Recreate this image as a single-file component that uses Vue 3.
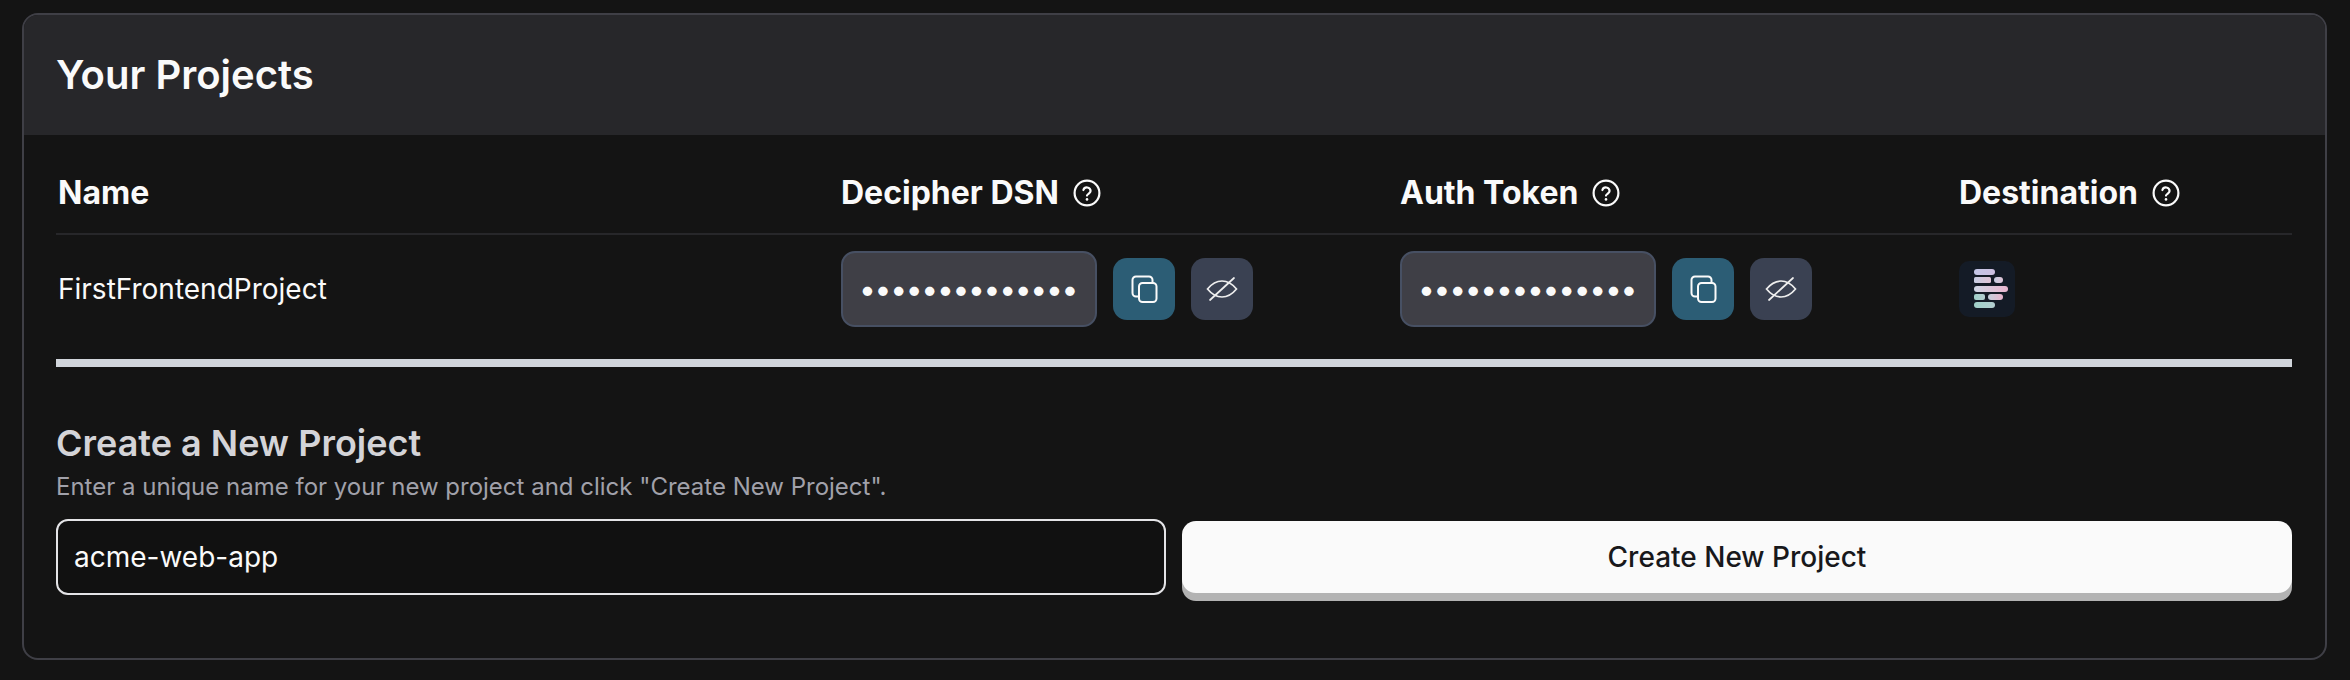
<script setup>
const columns = ['Decipher DSN', 'Auth Token', 'Destination']
const secrets = ['dsn-key-000000', 'tok-key-000000']
</script>

<template>
  <main class="card">
    <header class="card-head">
      <h1>Your Projects</h1>
    </header>
    <section class="card-body">
      <div class="table-row head-row">
        <div class="name-cell head-label">Name</div>
        <div v-for="col in columns" :key="col" class="head-cell">
          <span class="head-label">{{ col }}</span>
          <svg class="help" viewBox="0 0 28 28" fill="none" stroke="currentColor" stroke-width="2.2" stroke-linecap="round" aria-hidden="true">
            <circle cx="14" cy="14" r="12.4" />
            <path d="M10.4 11a3.7 3.7 0 0 1 7.2 1c0 2.4-3.6 3-3.6 4.6" />
            <path d="M14 20.4v.1" stroke-width="2.6" />
          </svg>
        </div>
      </div>
      <div class="table-row data-row">
        <div class="name-cell project-name">FirstFrontendProject</div>
        <div v-for="secret in secrets" :key="secret" class="secret-cell">
          <input class="secret" type="password" :value="secret" readonly />
          <button class="icon-btn copy" type="button" aria-label="Copy">
            <svg viewBox="0 0 32 32" fill="none" stroke="currentColor" stroke-width="2" aria-hidden="true">
              <path d="M24.5 10V7a3.5 3.5 0 0 0-3.5-3.5H8A3.5 3.5 0 0 0 4.5 7v13A3.5 3.5 0 0 0 8 23.5h3" />
              <rect x="11" y="10" width="17.5" height="19" rx="3.5" />
            </svg>
          </button>
          <button class="icon-btn eye" type="button" aria-label="Show">
            <svg viewBox="0 0 32 32" fill="none" stroke="currentColor" stroke-width="1.7" stroke-linecap="round" aria-hidden="true">
              <path d="M1.5 16C6 10.5 11 8 16 8s10 2.5 14.5 8C26 21.5 21 24 16 24S6 21.5 1.5 16Z" />
              <path d="M4 27 28 5" />
            </svg>
          </button>
        </div>
        <div class="dest-cell">
          <svg class="logo" viewBox="0 0 56 56" aria-hidden="true">
            <defs>
              <linearGradient id="g1" x1="0" x2="1" y1="0" y2="0"><stop offset="0" stop-color="#c3c6e6" /><stop offset="1" stop-color="#cdbfe0" /></linearGradient>
              <linearGradient id="g2" x1="0" x2="1" y1="0" y2="0"><stop offset="0" stop-color="#c5cbe0" /><stop offset="1" stop-color="#e0c4d6" /></linearGradient>
              <linearGradient id="g3" x1="0" x2="1" y1="0" y2="0"><stop offset="0" stop-color="#cfd6e4" /><stop offset="1" stop-color="#eab6cf" /></linearGradient>
              <linearGradient id="g4" x1="0" x2="1" y1="0" y2="0"><stop offset="0" stop-color="#9fd0c8" /><stop offset="1" stop-color="#b4ced0" /></linearGradient>
              <linearGradient id="g5" x1="0" x2="1" y1="0" y2="0"><stop offset="0" stop-color="#c4d0dc" /><stop offset="1" stop-color="#e9b4cc" /></linearGradient>
            </defs>
            <rect width="56" height="56" rx="10" fill="#141b26" />
            <rect x="15" y="8" width="21" height="6" rx="3" fill="url(#g1)" />
            <rect x="15" y="16" width="17" height="6" rx="1.5" fill="url(#g2)" />
            <rect x="35" y="16" width="9" height="6" rx="3" fill="url(#g2)" />
            <rect x="15" y="25" width="34" height="6" rx="3" fill="url(#g3)" />
            <rect x="15" y="33" width="11" height="6" rx="2" fill="url(#g4)" />
            <rect x="29" y="33" width="15" height="6" rx="3" fill="url(#g5)" />
            <rect x="15" y="41" width="21" height="6" rx="3" fill="url(#g4)" />
          </svg>
        </div>
      </div>
      <hr class="rule" />
      <h2>Create a New Project</h2>
      <p>Enter a unique name for your new project and click "Create New Project".</p>
      <div class="create-row">
        <input class="name-input" type="text" value="acme-web-app" />
        <button class="create-btn" type="button">Create New Project</button>
      </div>
    </section>
  </main>
</template>

<style>
html, body { background: #141414; }
</style>

<style scoped>
.card {
  margin: 13px 23px 20px 22px;
  height: 647px;
  box-sizing: border-box;
  border: 2px solid #3f3f46;
  border-radius: 16px;
  overflow: hidden;
  background: #141414;
  font-family: Inter, "Liberation Sans", sans-serif;
  color: #fafafa;
}
.card-head {
  height: 120px;
  background: #27272a;
  display: flex;
  align-items: center;
  padding: 0 32px;
}
h1 { margin: 0 0 1px; font-size: 40px; font-weight: 600; line-height: 44px; color: #fafafa; }
.card-body { padding: 17px 33px 0 32px; }
.table-row {
  display: grid;
  grid-template-columns: 785px 559px 559px 1fr;
  align-items: center;
}
.head-row { height: 81px; border-bottom: 2px solid #27272a; }
.data-row { height: 107px; }
.name-cell { padding-left: 2px; }
.head-cell { display: flex; align-items: center; gap: 14px; }
.head-label { font-size: 32px; font-weight: 700; line-height: 36px; }
.help { width: 28px; height: 28px; color: #fafafa; }
.project-name { font-size: 28px; line-height: 36px; }
.secret-cell { display: flex; align-items: center; gap: 16px; }
.secret {
  width: 256px;
  height: 76px;
  box-sizing: border-box;
  padding: 0 6px 0 16px;
  background: #3f3f46;
  border: 2px solid #475063;
  border-radius: 14px;
  color: #fafafa;
  font-family: inherit;
  font-size: 30px;
  letter-spacing: -1.3px;
  outline: none;
}
.icon-btn {
  width: 62px;
  height: 62px;
  padding: 0;
  border: 0;
  border-radius: 14px;
  display: flex;
  align-items: center;
  justify-content: center;
  color: #fafafa;
}
.icon-btn svg { width: 32px; height: 32px; }
.copy { background: #2c5d75; }
.eye { background: #3a4152; color: #eeeeee; }
.logo { display: block; width: 56px; height: 56px; }
.rule { margin: 17px 0 0; height: 8px; border: 0; background: #d1d5db; }
h2 { margin: 56px 0 0; font-size: 36px; font-weight: 600; line-height: 40px; color: #d4d4d8; }
p { margin: 8px 0 0; font-size: 24px; line-height: 32px; color: #a1a1aa; }
.create-row {
  margin-top: 16px;
  display: grid;
  grid-template-columns: 1fr 1fr;
  gap: 16px;
  align-items: center;
}
.name-input {
  height: 76px;
  box-sizing: border-box;
  min-width: 0;
  width: 100%;
  padding: 0 16px;
  background: #111111;
  border: 2px solid #e4e4e7;
  border-radius: 12px;
  color: #fafafa;
  font-family: inherit;
  font-size: 28px;
  outline: none;
}
.create-btn {
  height: 72px;
  border: 0;
  border-radius: 14px;
  background: #fafafa;
  box-shadow: 0 8px 0 #b3b3b3;
  color: #18181b;
  font-family: inherit;
  font-size: 28px;
  font-weight: 500;
}
</style>
